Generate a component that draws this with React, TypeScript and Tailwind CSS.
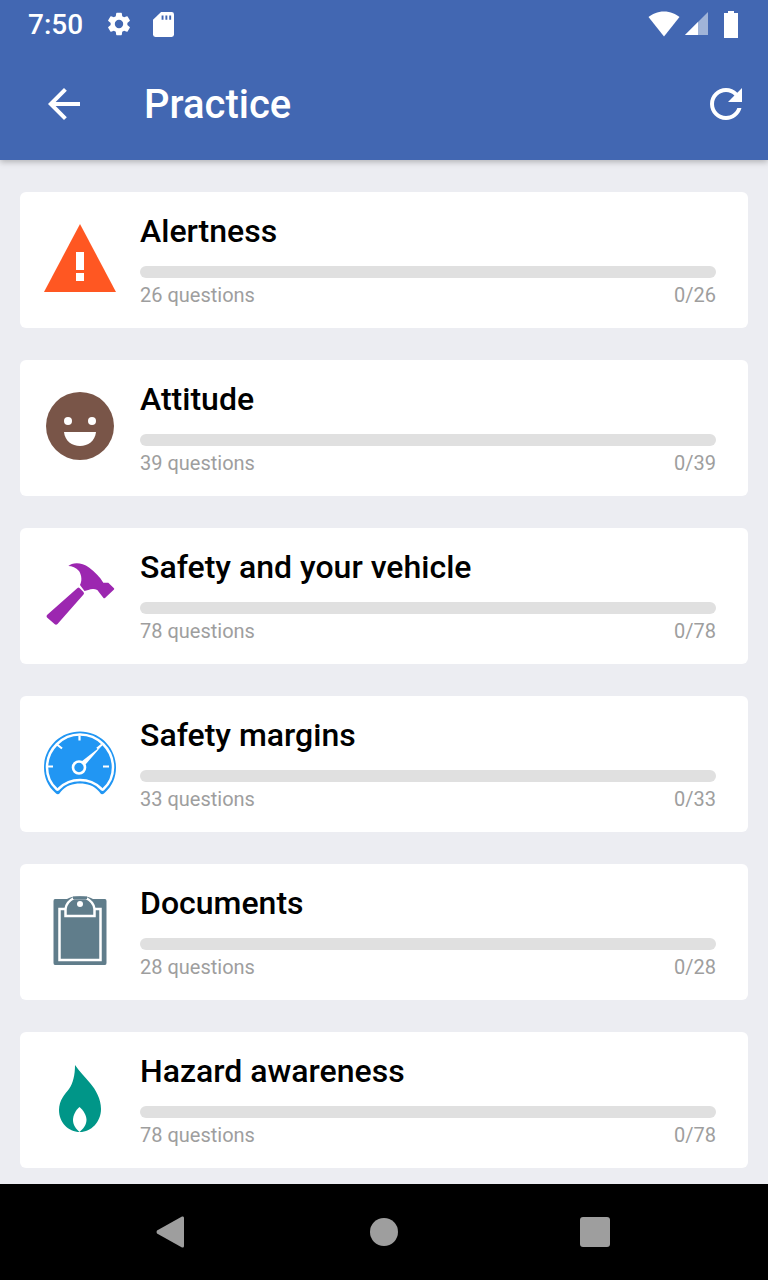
import React from 'react';

const AlertIcon = () => (
  <svg width="74" height="68" viewBox="0 0 74 68">
    <path d="M37 0 L73 68 H1 Z" fill="#ff5722" />
    <rect x="33" y="28" width="8" height="18" fill="#fff" />
    <rect x="33" y="49" width="8" height="8" fill="#fff" />
  </svg>
);

const SmileIcon = () => (
  <svg width="68" height="68" viewBox="0 0 68 68">
    <circle cx="34" cy="34" r="34" fill="#795548" />
    <circle cx="22" cy="29" r="4" fill="#fff" />
    <circle cx="46" cy="29" r="4" fill="#fff" />
    <path d="M18 40 H50 C49 49 42 54 34 54 C26 54 19 49 18 40 Z" fill="#fff" />
  </svg>
);

const HammerIcon = () => (
  <svg width="70" height="66" viewBox="0 0 70 66">
    <path d="M2 54 L32.5 27 Q33.5 26 34.5 27 L38.5 31 Q39.5 32.5 38.5 33.5 L12.5 63 Q11 64.5 9.5 63 L2 56.5 Q1 55 2 54 Z" fill="#9c27b0" />
    <path d="M23.3 5 C27 1.5 36 0.5 44 6.5 C50 11 55 16 58.3 21.7 L63.3 21.7 L69 27.3 Q69.5 28 69 28.5 L60 37 Q59 37.5 58.5 37 L52.3 29 C49 27.5 46 28 43.3 29 L39.5 30 L35 24 C37 20 37 15 34 10 C31 6.5 27 5 23.3 5 Z" fill="#9c27b0" />
  </svg>
);

const GaugeIcon = () => (
  <svg width="74" height="66" viewBox="0 0 74 66">
    <g transform="translate(0 1.5)">
      <path d="M37 1 C17 1 1 17 1 37 C1 47 5 56 12 62 Q15 66 18 61 C23 55 30 53 37 53 C44 53 51 55 56 61 Q59 66 62 62 C69 56 73 47 73 37 C73 17 57 1 37 1 Z" fill="#2196f3" />
      <path d="M37 4 C19 4 4 19 4 37 C4 45.5 7.5 53 13.5 58.5 Q15 60 16 58 C22 52 29 49.5 37 49.5 C45 49.5 52 52 58 58 Q59 60 60.5 58.5 C66.5 53 70 45.5 70 37 C70 19 55 4 37 4 Z" fill="none" stroke="#fff" strokeWidth="2.5" />
      <path d="M36.5 5 V10 M14 14 L19 18 M4 36 H10 M60 36 H66 M59 14 L54 18" stroke="#fff" strokeWidth="2.2" />
      <circle cx="36" cy="37" r="6" fill="#2196f3" stroke="#fff" strokeWidth="2.6" />
      <path d="M38.5 31 L59 15 L42.5 34 Z" fill="#fff" />
    </g>
  </svg>
);

const ClipboardIcon = () => (
  <svg width="54" height="70" viewBox="0 0 54 70">
    <path d="M2 4 H14 C17 2 22 1 27 1 C32 1 37 2 40 4 H52 Q53.5 4 53.5 6 V68 Q53.5 70 52 70 H2 Q0.5 70 0.5 68 V6 Q0.5 4 2 4 Z" fill="#607d8b" />
    <rect x="6.5" y="14" width="41" height="51" fill="none" stroke="#fff" strokeWidth="2.5" />
    <path d="M12.5 21 V14 C13 9 17 5 21 3 H33 C37 5 41 9 41.5 14 V21 Z" fill="#607d8b" stroke="#fff" strokeWidth="2.5" />
    <path d="M20 1.5 H34 V4 H20 Z" fill="#607d8b" />
    <circle cx="27" cy="9" r="3" fill="#fff" />
  </svg>
);

const FlameIcon = () => (
  <svg width="44" height="70" viewBox="0 0 44 70">
    <g transform="translate(0 1)">
      <path d="M17 1 C21 7 27 13 32 19 C38 26 43 35 43 45 C43 58 33 68 22 68 C10 68 1 58 1 46 C1 36 7 30 11 25 C15 19 17 11 17 1 Z" fill="#009688" />
      <path d="M21.5 43 C25 46 28.5 51 28.5 56 C28.5 61 25 65 21.5 68 C18 65 15 61 15 56 C15 51 18 46 21.5 43 Z" fill="#fff" />
    </g>
  </svg>
);

const topics = [
  { name: 'Alertness', total: 26, icon: <AlertIcon /> },
  { name: 'Attitude', total: 39, icon: <SmileIcon /> },
  { name: 'Safety and your vehicle', total: 78, icon: <HammerIcon /> },
  { name: 'Safety margins', total: 33, icon: <GaugeIcon /> },
  { name: 'Documents', total: 28, icon: <ClipboardIcon /> },
  { name: 'Hazard awareness', total: 78, icon: <FlameIcon /> },
];

const TopicCard = ({ name, total, icon }: { name: string; total: number; icon: React.ReactNode }) => (
  <div className="flex h-[136px] rounded-[6px] bg-white pr-8">
    <div className="flex w-[120px] shrink-0 items-center justify-center pb-1">{icon}</div>
    <div className="flex-1 pt-[19px]">
      <h2 className="text-[32px] leading-10 font-medium text-black">{name}</h2>
      <div className="mt-[15px] h-3 rounded-full bg-[#e0e0e0]" />
      <div className="mt-[3px] flex justify-between text-[20px] leading-[28px] text-[#9e9e9e]">
        <span>{total} questions</span>
        <span>0/{total}</span>
      </div>
    </div>
  </div>
);

export default function App() {
  return (
    <div className="flex h-[1280px] flex-col overflow-hidden bg-[#ecedf2] font-['Roboto',sans-serif]">
      <header className="z-10 h-40 shrink-0 bg-[#4267b2] text-white shadow-[0_2px_6px_rgba(0,0,0,0.25)]">
        <div className="flex h-12 items-center pr-[30px] pl-7">
          <span className="pt-0.5 text-[28px] leading-none font-medium">7:50</span>
          <svg className="ml-[22px]" width="28" height="28" viewBox="0 0 24 24" fill="#fff">
            <path d="M19.14 12.94c.04-.3.06-.61.06-.94s-.02-.64-.07-.94l2.03-1.58a.49.49 0 0 0 .12-.61l-1.92-3.32a.49.49 0 0 0-.59-.22l-2.39.96a7 7 0 0 0-1.62-.94l-.36-2.54a.48.48 0 0 0-.48-.41h-3.84a.47.47 0 0 0-.47.41l-.36 2.54c-.59.24-1.13.57-1.62.94l-2.39-.96a.48.48 0 0 0-.59.22L2.74 8.87a.48.48 0 0 0 .12.61l2.03 1.58c-.05.3-.09.63-.09.94s.02.64.07.94l-2.03 1.58a.49.49 0 0 0-.12.61l1.92 3.32c.12.22.37.29.59.22l2.39-.96c.5.38 1.03.7 1.62.94l.36 2.54c.05.24.24.41.48.41h3.84c.24 0 .44-.17.47-.41l.36-2.54c.59-.24 1.13-.56 1.62-.94l2.39.96c.22.08.47 0 .59-.22l1.92-3.32a.46.46 0 0 0-.12-.61l-2.01-1.58zM12 15.6A3.6 3.6 0 1 1 12 8.4a3.6 3.6 0 0 1 0 7.2z" />
          </svg>
          <svg className="mt-px ml-5" width="21" height="25" viewBox="0 0 22 26" fill="#fff">
            <path d="M8.5 0 H19.5 Q22 0 22 2.5 V23.5 Q22 26 19.5 26 H2.5 Q0 26 0 23.5 V8 Z" />
            <path d="M9 3.5 H11 V8 H9 Z M13 3.5 H15 V8 H13 Z M17 3.5 H19 V8 H17 Z" fill="#4267b2" />
          </svg>
          <div className="ml-auto flex items-center">
            <svg width="32" height="26" viewBox="0 0 32 26" fill="#fff">
              <path d="M16 25.5 L0.5 6 C4 3 9.5 0.5 16 0.5 C22.5 0.5 28 3 31.5 6 Z" />
            </svg>
            <svg className="ml-[5px]" width="23" height="24" viewBox="0 0 23 24">
              <path d="M0 23 L23 0 V23 Z" fill="#a0b4d8" />
              <path d="M0 23 L13 10 V23 Z" fill="#fff" />
            </svg>
            <svg className="ml-4" width="14" height="27" viewBox="0 0 14 27" fill="#fff">
              <path d="M4 0 H10 V2 H14 V27 H0 V2 H4 Z" />
            </svg>
          </div>
        </div>
        <div className="flex h-28 items-center pr-[18px] pl-10">
          <svg width="48" height="48" viewBox="0 0 24 24" fill="#fff">
            <path d="M20 11H7.83l5.59-5.59L12 4l-8 8 8 8 1.41-1.41L7.83 13H20v-2z" />
          </svg>
          <h1 className="ml-[56px] pt-px text-[40px] leading-none font-medium">Practice</h1>
          <svg className="ml-auto" width="48" height="48" viewBox="0 0 24 24" fill="#fff">
            <path d="M17.65 6.35C16.2 4.9 14.21 4 12 4c-4.42 0-7.99 3.58-7.99 8s3.57 8 7.99 8c3.73 0 6.84-2.55 7.73-6h-2.08c-.82 2.33-3.04 4-5.65 4-3.31 0-6-2.69-6-6s2.69-6 6-6c1.66 0 3.14.69 4.22 1.78L13 11h7V4l-2.35 2.35z" />
          </svg>
        </div>
      </header>
      <main className="flex flex-1 flex-col gap-8 px-5 pt-8">
        {topics.map((t) => (
          <TopicCard key={t.name} name={t.name} total={t.total} icon={t.icon} />
        ))}
      </main>
      <nav className="z-10 flex h-24 shrink-0 items-center bg-black pr-[158px] pl-[156px]">
        <svg width="28" height="32" viewBox="0 0 28 32" fill="#9e9e9e">
          <path d="M27 0.5 Q28 0.5 28 2 V30 Q28 32 26 31.5 L1 17.5 Q0 16 1 14.5 L26 0.5 Z" />
        </svg>
        <div className="ml-[186px] h-7 w-7 rounded-full bg-[#9e9e9e]" />
        <div className="ml-auto h-[30px] w-[30px] rounded-[3px] bg-[#9e9e9e]" />
      </nav>
    </div>
  );
}
